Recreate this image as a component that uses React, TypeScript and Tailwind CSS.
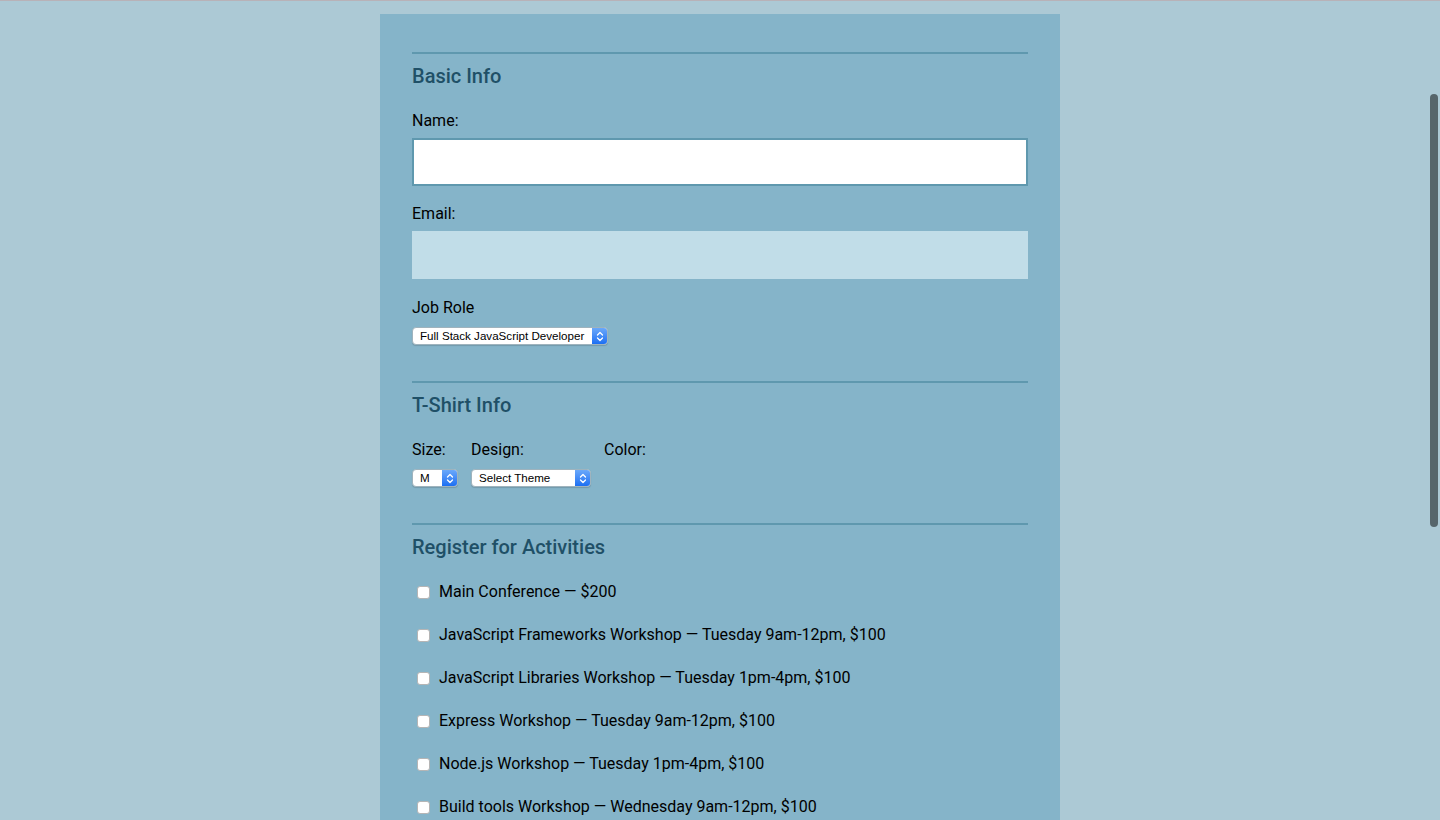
import React from "react";

function Chevrons() {
  return (
    <svg width="8" height="11" viewBox="0 0 8 11" fill="none">
      <path d="M1.5 4 L4 1.5 L6.5 4" stroke="white" strokeWidth="1.3" strokeLinecap="round" strokeLinejoin="round" />
      <path d="M1.5 7 L4 9.5 L6.5 7" stroke="white" strokeWidth="1.3" strokeLinecap="round" strokeLinejoin="round" />
    </svg>
  );
}

function FakeSelect({ text, className }: { text: string; className: string }) {
  return (
    <div
      className={
        "flex h-[18px] items-stretch overflow-hidden rounded-[4px] border border-[#9fb3bd] bg-white shadow-[0_1px_1px_rgba(0,0,0,0.15)] " +
        className
      }
    >
      <div className="flex flex-1 items-center pl-[7px] text-[11.6px] leading-none text-black [font-family:'Liberation_Sans',Arial,sans-serif]">
        {text}
      </div>
      <div className="flex w-[15px] items-center justify-center bg-gradient-to-b from-[#6aa8fa] to-[#1b6ff2]">
        <Chevrons />
      </div>
    </div>
  );
}

function SectionTitle({ children }: { children: React.ReactNode }) {
  return (
    <>
      <div className="h-[2px] bg-[#5f98ae]" />
      <h2 className="mt-[10px] h-[24px] text-[20px] font-medium leading-[24px] text-[#1f5067]">{children}</h2>
    </>
  );
}

const activities = [
  "Main Conference — $200",
  "JavaScript Frameworks Workshop — Tuesday 9am-12pm, $100",
  "JavaScript Libraries Workshop — Tuesday 1pm-4pm, $100",
  "Express Workshop — Tuesday 9am-12pm, $100",
  "Node.js Workshop — Tuesday 1pm-4pm, $100",
  "Build tools Workshop — Wednesday 9am-12pm, $100",
  "npm Workshop — Wednesday 1pm-4pm, $100",
];

export default function App() {
  return (
    <div className="relative h-[820px] overflow-hidden border-t border-[#b8b2b8] bg-[#acc9d5] [font-family:Roboto,'Liberation_Sans',sans-serif]">
      <div className="mx-auto mt-[13px] min-h-[1200px] w-[680px] bg-[#85b4c9] px-[32px] pt-[38px] text-[16px] text-black">
        <SectionTitle>Basic Info</SectionTitle>
        <label className="mt-[23px] block h-[20px] leading-[20px]">Name:</label>
        <div className="mt-[7px] h-[48px] border-2 border-[#5f98ae] bg-white" />
        <label className="mt-[18px] block h-[20px] leading-[20px]">Email:</label>
        <div className="mt-[7px] h-[48px] bg-[#c1dde8]" />
        <label className="mt-[19px] block h-[20px] leading-[20px]">Job Role</label>
        <FakeSelect text="Full Stack JavaScript Developer" className="mt-[9px] w-[196px]" />

        <div className="mt-[36px]">
          <SectionTitle>T-Shirt Info</SectionTitle>
        </div>
        <div className="mt-[23px] flex">
          <div className="w-[59px]">
            <div className="h-[20px] leading-[20px]">Size:</div>
            <FakeSelect text="M" className="mt-[9px] w-[46px]" />
          </div>
          <div className="w-[133px]">
            <div className="h-[20px] leading-[20px]">Design:</div>
            <FakeSelect text="Select Theme" className="mt-[9px] w-[120px]" />
          </div>
          <div>
            <div className="h-[20px] leading-[20px]">Color:</div>
          </div>
        </div>

        <div className="mt-[36px]">
          <SectionTitle>Register for Activities</SectionTitle>
        </div>
        <div className="mt-[23px] flex flex-col gap-[23px]">
          {activities.map((a) => (
            <label key={a} className="flex h-[20px] items-center pl-[5px] leading-[20px]">
              <span className="mr-[9px] inline-block h-[13px] w-[13px] rounded-[3px] border border-[#b5b5b5] bg-white" />
              {a}
            </label>
          ))}
        </div>
      </div>
      <div className="absolute right-[2px] top-[93px] h-[433px] w-[8px] rounded-full bg-[#56656b]" />
    </div>
  );
}
